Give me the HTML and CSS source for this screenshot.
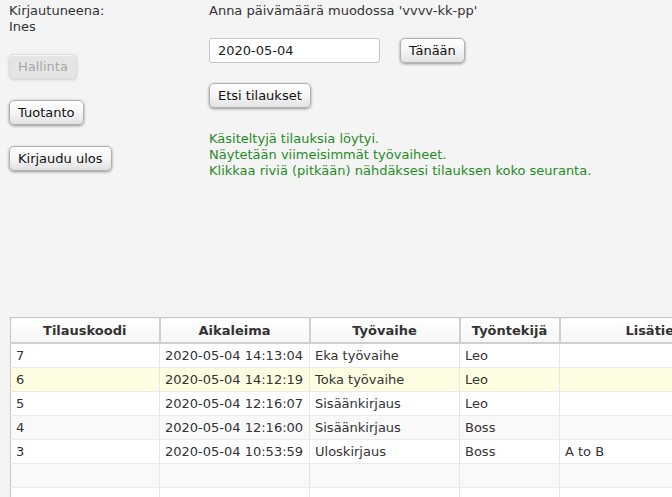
FILE: index.html
```html
<!DOCTYPE html>
<html lang="fi">
<head>
<meta charset="utf-8">
<link rel="stylesheet" href="styles.css">
</head>
<body>
<div class="app">
  <div class="top">
    <div class="side">
      <div class="user">Kirjautuneena:<br>Ines</div>
      <button class="btn disabled">Hallinta</button>
      <button class="btn">Tuotanto</button>
      <button class="btn">Kirjaudu ulos</button>
    </div>
    <div class="main">
      <div class="label">Anna päivämäärä muodossa 'vvvv-kk-pp'</div>
      <div class="daterow">
        <input class="field" type="text" value="2020-05-04">
        <button class="btn">Tänään</button>
      </div>
      <button class="btn search">Etsi tilaukset</button>
      <div class="info">Käsiteltyjä tilauksia löytyi.<br>Näytetään viimeisimmät työvaiheet.<br>Klikkaa riviä (pitkään) nähdäksesi tilauksen koko seuranta.</div>
    </div>
  </div>
  <div class="tablewrap">
    <table class="grid">
      <colgroup>
        <col class="c1"><col class="c2"><col class="c3"><col class="c4"><col class="c5">
      </colgroup>
      <thead>
        <tr><th>Tilauskoodi</th><th>Aikaleima</th><th>Työvaihe</th><th>Työntekijä</th><th>Lisätiedot</th></tr>
      </thead>
      <tbody>
        <tr><td>7</td><td>2020-05-04 14:13:04</td><td>Eka työvaihe</td><td>Leo</td><td></td></tr>
        <tr class="hl"><td>6</td><td>2020-05-04 14:12:19</td><td>Toka työvaihe</td><td>Leo</td><td></td></tr>
        <tr><td>5</td><td>2020-05-04 12:16:07</td><td>Sisäänkirjaus</td><td>Leo</td><td></td></tr>
        <tr class="odd"><td>4</td><td>2020-05-04 12:16:00</td><td>Sisäänkirjaus</td><td>Boss</td><td></td></tr>
        <tr><td>3</td><td>2020-05-04 10:53:59</td><td>Uloskirjaus</td><td>Boss</td><td>A to B</td></tr>
        <tr class="odd"><td></td><td></td><td></td><td></td><td></td></tr>
        <tr><td></td><td></td><td></td><td></td><td></td></tr>
      </tbody>
    </table>
  </div>
</div>
</body>
</html>
```
FILE: styles.css
```css
html, body {
  margin: 0;
  padding: 0;
  background: #f4f4f4;
  overflow: hidden;
}
body {
  font-family: "DejaVu Sans", sans-serif;
  font-size: 13px;
  color: #333333;
  width: 672px;
  height: 497px;
}
.app {
  display: flex;
  flex-direction: column;
}
.top {
  display: flex;
  height: 317px;
}
.side {
  width: 200px;
  padding: 3px 0 0 9px;
  display: flex;
  flex-direction: column;
  align-items: flex-start;
}
.user {
  line-height: 16px;
  margin-bottom: 19px;
}
.btn {
  font-family: "DejaVu Sans", sans-serif;
  font-size: 13px;
  color: #111;
  height: 25px;
  padding: 0 8px;
  border: 1px solid #b0b0b0;
  border-radius: 5px;
  background: linear-gradient(#ffffff, #f4f4f4 55%, #e2e2e2);
  box-shadow: 0 1px 3px rgba(0,0,0,0.4), inset 0 1px 0 #ffffff;
  margin-bottom: 21px;
  line-height: 23px;
}
.btn.disabled {
  opacity: 0.4;
  color: #333;
  background: #d0d0d0;
  border-color: #bcbcbc;
}
.main {
  display: flex;
  flex-direction: column;
  align-items: flex-start;
  padding-top: 3px;
}
.label {
  line-height: 15px;
  margin-bottom: 20px;
}
.daterow {
  display: flex;
  gap: 20px;
  align-items: center;
}
.field {
  font-family: "DejaVu Sans", sans-serif;
  font-size: 13px;
  color: #222;
  width: 171px;
  height: 25px;
  box-sizing: border-box;
  border: 1px solid #c4c4c4;
  border-radius: 3px;
  background: #ffffff;
  padding: 0 8px;
  margin: 0;
}
.daterow .btn { margin-bottom: 0; }
.search {
  margin-top: 20px;
}
.info {
  color: #1f8c1f;
  line-height: 16px;
  margin-top: 2px;
}
.tablewrap {
  padding-left: 10px;
  overflow: hidden;
}
.grid {
  border-collapse: collapse;
  table-layout: fixed;
  width: 754px;
  border-top: 1px solid #c4c4c4;
  border-left: 1px solid #c4c4c4;
  background: #ffffff;
}
.c1 { width: 149px; }
.c2, .c3 { width: 150px; }
.c4 { width: 100px; }
.c5 { width: 205px; }
.grid th {
  height: 24px;
  padding: 0;
  font-weight: bold;
  color: #333;
  background: linear-gradient(#ffffff, #f6f6f6);
  border-right: 2px solid #cfcfcf;
  border-bottom: 2px solid #cfcfcf;
  text-align: center;
}
.grid td {
  height: 23px;
  padding: 0 0 0 5px;
  border-right: 1px solid #e6e6e6;
  border-bottom: 1px solid #eaeaea;
  white-space: nowrap;
  overflow: hidden;
}
.grid tr.hl td { background: #fffde1; }
.grid tr.odd td { background: #f9f9f9; }
```
